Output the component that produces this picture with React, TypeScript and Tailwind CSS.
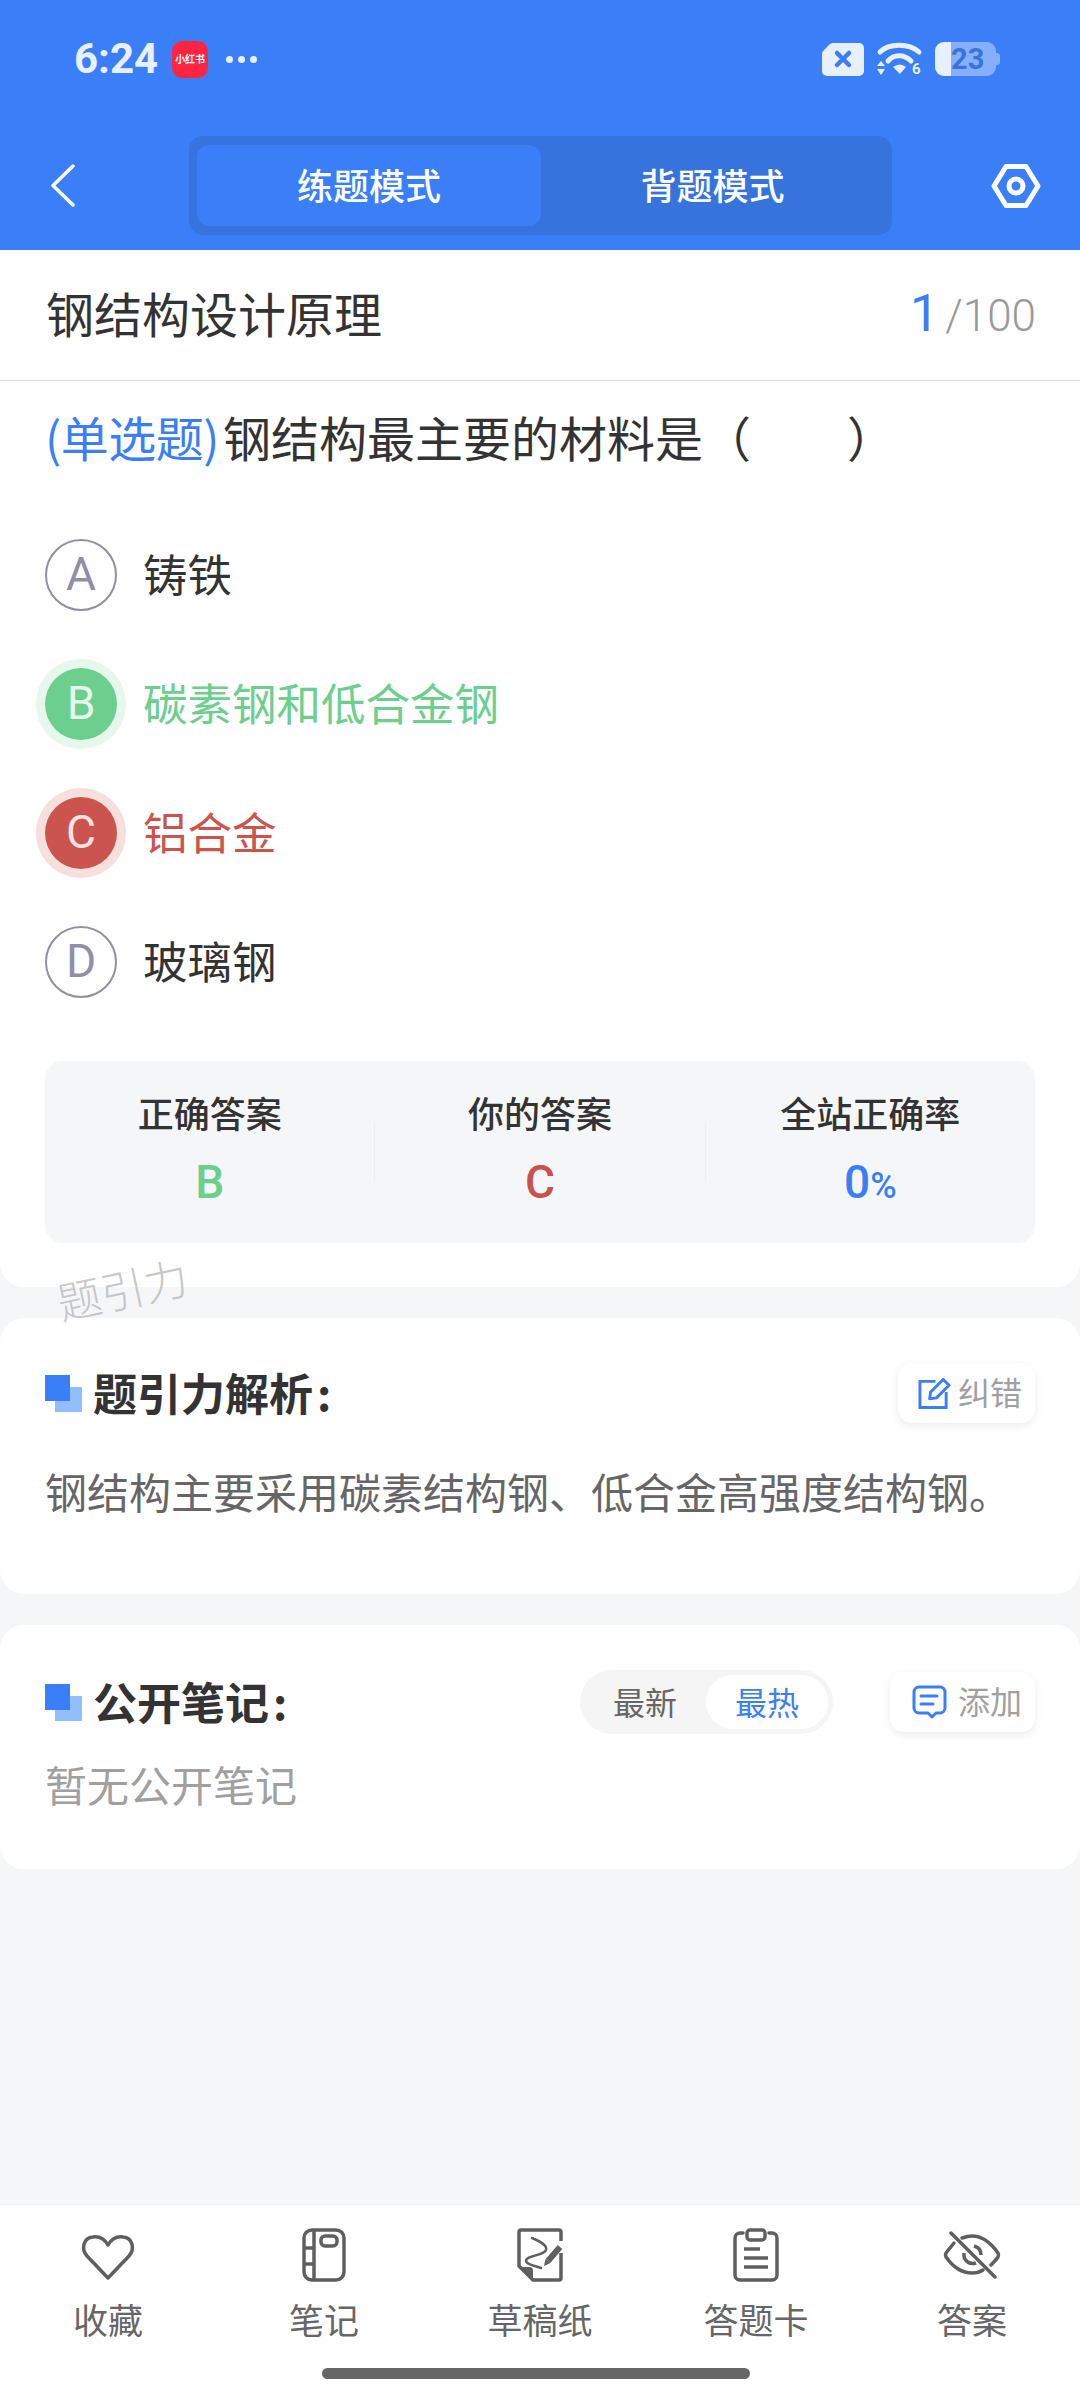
const options = [
  { key: 'A', text: '铸铁', state: 'idle' },
  { key: 'B', text: '碳素钢和低合金钢', state: 'right' },
  { key: 'C', text: '铝合金', state: 'wrong' },
  { key: 'D', text: '玻璃钢', state: 'idle' },
]

function SectionMark() {
  return (
    <svg width="37" height="37" viewBox="0 0 37 37" className="shrink-0">
      <rect x="10" y="12" width="27" height="25" fill="#93bdfb" />
      <rect x="0" y="0" width="25" height="26" fill="#3b7ff8" />
    </svg>
  )
}

function StatusBar() {
  return (
    <div className="flex h-[118px] items-center pl-[74px]">
      <span className="font-['Roboto',sans-serif] text-[42px] font-bold leading-none text-[#e8effd]">6:24</span>
      <div className="ml-[14px] flex h-[37px] w-[36px] items-center justify-center rounded-[10px] bg-[#ff2442] text-[10px] font-bold leading-none whitespace-nowrap text-white">
        小红书
      </div>
      <div className="ml-[18px] flex gap-[5px]">
        <div className="h-[7px] w-[7px] rounded-full bg-[#e8effd]" />
        <div className="h-[7px] w-[7px] rounded-full bg-[#e8effd]" />
        <div className="h-[7px] w-[7px] rounded-full bg-[#e8effd]" />
      </div>
      <div className="ml-auto mr-[80px] flex items-center gap-[11px]">
        <svg width="44" height="35" viewBox="0 0 44 35">
          <path d="M12 1H38a5 5 0 0 1 5 5V29a5 5 0 0 1-5 5H6a5 5 0 0 1-5-5V12Q1 10 3 8L9 2Q10 1 12 1Z" fill="#e8effd" />
          <path d="M16 11L28 23M28 11L16 23" stroke="#3b7ff8" strokeWidth="4.5" strokeLinecap="round" />
        </svg>
        <svg width="48" height="38" viewBox="0 0 48 38">
          <path d="M4 12C13 3 33 3 43 12" fill="none" stroke="#e8effd" strokeWidth="5" strokeLinecap="round" />
          <path d="M12 21C18 14 28 14 35 21" fill="none" stroke="#e8effd" strokeWidth="5" strokeLinecap="round" />
          <path d="M17 27Q24 22 30 27L24 34Z" fill="#e8effd" />
          <path d="M5 21L9 26H1ZM1 29H9L5 35Z" fill="#e8effd" />
          <text x="36" y="34" fill="#e8effd" fontSize="15" fontWeight="700" fontFamily="Roboto, sans-serif">6</text>
        </svg>
        <div className="relative h-[34px] w-[65px]">
          <div className="absolute left-0 top-0 h-[34px] w-[61px] overflow-hidden rounded-[9px] bg-[#85aefb]">
            <div className="h-full w-[16px] bg-[#e8effd]" />
          </div>
          <div className="absolute right-0 top-[11px] h-[12px] w-[4px] rounded-r-[3px] bg-[#85aefb]" />
          <span className="absolute left-[16px] top-0 font-['Roboto',sans-serif] text-[29px] font-bold leading-[34px] text-[#3673dd]">23</span>
        </div>
      </div>
    </div>
  )
}

function Header() {
  return (
    <div className="h-[250px] bg-[#3b7ff8]">
      <StatusBar />
      <div className="mt-[18px] flex items-start">
        <div className="flex h-[99px] w-[189px] items-center pl-[50px]">
          <svg width="26" height="43" viewBox="0 0 26 43">
            <path d="M23 2L3 21.5L23 41" fill="none" stroke="white" strokeWidth="3.5" strokeLinecap="round" strokeLinejoin="round" />
          </svg>
        </div>
        <div className="flex h-[99px] w-[703px] rounded-[14px] bg-[#3673dd] px-[8px] py-[9px] text-[36px] font-medium text-white">
          <div className="flex w-[344px] items-center justify-center rounded-[12px] bg-[#3b7ff8] pb-[4px]">练题模式</div>
          <div className="flex flex-1 items-center justify-center pb-[4px]">背题模式</div>
        </div>
        <div className="flex h-[99px] flex-1 items-center justify-end pr-[39px]">
          <svg width="50" height="46" viewBox="0 0 50 46">
            <path d="M15 3.5H35L47 23L35 42.5H15L3 23Z" fill="none" stroke="white" strokeWidth="5" strokeLinejoin="round" />
            <circle cx="25" cy="23" r="7" fill="none" stroke="white" strokeWidth="5" />
          </svg>
        </div>
      </div>
    </div>
  )
}

function OptionRow({ item }: { item: (typeof options)[number] }) {
  const circle =
    item.state === 'right'
      ? 'bg-[#6ccf8e] text-[#e6f7ec] shadow-[0_0_0_9px_#e6f7ec]'
      : item.state === 'wrong'
        ? 'bg-[#cc544e] text-[#f8e3e1] shadow-[0_0_0_9px_#f5e0de]'
        : 'border-2 border-[#8f90a6] text-[#8f90a6]'
  const label = item.state === 'right' ? 'text-[#6ccf8e]' : item.state === 'wrong' ? 'text-[#cc544e]' : 'text-[#333333]'
  return (
    <div className="flex h-[129px] items-center">
      <div className={`flex h-[72px] w-[72px] items-center justify-center rounded-full font-['Roboto',sans-serif] text-[46px] font-normal ${circle}`}>
        {item.key}
      </div>
      <span className={`ml-[26px] pb-[3px] text-[44.5px] ${label}`}>{item.text}</span>
    </div>
  )
}

function StatCol({ title, children }: { title: string; children: React.ReactNode }) {
  return (
    <div className="flex flex-1 flex-col items-center pb-[11px]">
      <div className="h-[50px] text-[36px] font-medium leading-[50px] text-[#333333]">{title}</div>
      <div className="mt-[20px] h-[50px] font-['Roboto',sans-serif] text-[46px] font-medium leading-[50px]">{children}</div>
    </div>
  )
}

function QuestionCard() {
  return (
    <div className="rounded-b-[24px] bg-white pb-[44px]">
      <div className="flex h-[131px] items-center justify-between border-b border-[#dcdcdc] pl-[46px] pr-[44px]">
        <span className="pb-[6px] text-[48px] leading-none text-[#333333]">钢结构设计原理</span>
        <span className="pb-[2px] font-['Roboto',sans-serif] font-light leading-none text-[#999999]">
          <span className="text-[52px] font-normal text-[#3b7ff8]">1</span>
          <span className="ml-[6px] text-[44px]">/100</span>
        </span>
      </div>
      <div className="mt-[25px] flex items-baseline pl-[45px] text-[48px] leading-[60px] text-[#333333]">
        <span className="tracking-[-0.5px] text-[#3b7ff8]">(单选题)</span>
        <span className="ml-[4px]">钢结构最主要的材料是（　　）</span>
      </div>
      <div className="mt-[44px] px-[45px]">
        {options.map((item) => (
          <OptionRow key={item.key} item={item} />
        ))}
      </div>
      <div className="mx-[45px] mt-[35px] flex h-[182px] items-center rounded-[18px] bg-[#f5f6f8]">
        <StatCol title="正确答案">
          <span className="text-[#6ccf8e]">B</span>
        </StatCol>
        <div className="h-[60px] w-px bg-[#eceef1]" />
        <StatCol title="你的答案">
          <span className="text-[#c9524d]">C</span>
        </StatCol>
        <div className="h-[60px] w-px bg-[#eceef1]" />
        <StatCol title="全站正确率">
          <span className="text-[#3b7ff8]">
            0<span className="text-[36px]">%</span>
          </span>
        </StatCol>
      </div>
    </div>
  )
}

function SmallButton({ icon, label, box }: { icon: React.ReactNode; label: string; box: string }) {
  return (
    <div className={`flex h-[60px] items-center rounded-[14px] bg-white text-[32px] text-[#a0a0a0] shadow-[0_3px_10px_rgba(0,0,0,0.08)] ${box}`}>
      {icon}
      <span className="ml-auto pb-[5px]">{label}</span>
    </div>
  )
}

function SectionTitle({ text }: { text: string }) {
  return (
    <span className="ml-[11px] pb-[2px] text-[44px] font-bold leading-none text-[#333333]">
      {text}
      <span className="ml-[4px]">:</span>
    </span>
  )
}

function AnalysisCard() {
  return (
    <div className="mt-[31px] rounded-[24px] bg-white px-[45px] pb-[73px] pt-[45px]">
      <div className="flex h-[60px] items-center">
        <SectionMark />
        <SectionTitle text="题引力解析" />
        <div className="ml-auto">
          <SmallButton
            box="w-[137px] pl-[20px] pr-[13px]"
            label="纠错"
            icon={
              <svg width="33" height="34" viewBox="0 0 34 34">
                <path d="M18 5H2V32H29V16" fill="none" stroke="#3b7ff8" strokeWidth="3" />
                <path d="M12 23L13 16L26 3L32 9L19 22Z" fill="none" stroke="#3b7ff8" strokeWidth="3" strokeLinejoin="round" />
              </svg>
            }
          />
        </div>
      </div>
      <div className="mt-[38px] text-[42px] leading-[60px] whitespace-nowrap text-[#666666]">钢结构主要采用碳素结构钢、低合金高强度结构钢。</div>
    </div>
  )
}

function NotesCard() {
  return (
    <div className="mt-[31px] rounded-[24px] bg-white px-[45px] pb-[55px] pt-[45px]">
      <div className="flex h-[64px] items-center">
        <SectionMark />
        <SectionTitle text="公开笔记" />
        <div className="ml-auto flex h-[64px] w-[253px] items-center rounded-full bg-[#f5f5f5] pl-[33px] pr-[5px] text-[32px]">
          <span className="pb-[3px] text-[#666666]">最新</span>
          <span className="ml-[29px] flex h-[54px] w-[122px] items-center justify-center rounded-full bg-white pb-[3px] text-[#3b7ff8]">最热</span>
        </div>
        <div className="ml-[57px]">
          <SmallButton
            box="w-[145px] pl-[22px] pr-[13px]"
            label="添加"
            icon={
              <svg width="35" height="34" viewBox="0 0 35 34">
                <path d="M7 2H28a5 5 0 0 1 5 5V23a5 5 0 0 1-5 5H24L20 32L16 28H7a5 5 0 0 1-5-5V7a5 5 0 0 1 5-5Z" fill="none" stroke="#3b7ff8" strokeWidth="3" strokeLinejoin="round" />
                <path d="M9 11H25M9 19H21" stroke="#3b7ff8" strokeWidth="3" strokeLinecap="round" />
              </svg>
            }
          />
        </div>
      </div>
      <div className="mt-[20px] text-[42px] leading-[60px] text-[#a0a0a0]">暂无公开笔记</div>
    </div>
  )
}

const tabIcons = [
  <svg key="fav" width="56" height="50" viewBox="0 0 56 50" className="mt-[4px]">
    <path d="M28 46L7 24C1 17 3 6 13 5C20 4 25 8 28 13C31 8 36 4 43 5C53 6 55 17 49 24Z" fill="none" stroke="#5f5f5f" strokeWidth="3.5" strokeLinejoin="round" />
  </svg>,
  <svg key="note" width="44" height="54" viewBox="0 0 44 54">
    <rect x="2" y="2" width="40" height="50" rx="8" fill="none" stroke="#5f5f5f" strokeWidth="3.5" />
    <path d="M12 2V52M2 20H12M2 36H12" stroke="#5f5f5f" strokeWidth="3.5" />
    <rect x="19" y="8" width="16" height="10" rx="4" fill="none" stroke="#5f5f5f" strokeWidth="3.5" />
  </svg>,
  <svg key="draft" width="46" height="54" viewBox="0 0 46 54">
    <path d="M44 13V4a2 2 0 0 0-2-2H4a2 2 0 0 0-2 2V38L16 52H42a2 2 0 0 0 2-2V25" fill="none" stroke="#5f5f5f" strokeWidth="3.5" strokeLinejoin="round" />
    <path d="M3 39H12a4 4 0 0 1 4 4V51Z" fill="#5f5f5f" />
    <path d="M15 10C22 13 31 17 29 22C27 28 9 27 9 33C9 36 18 38 24 40" fill="none" stroke="#5f5f5f" strokeWidth="2.5" strokeLinecap="round" />
    <path d="M31 33L43 19" stroke="#5f5f5f" strokeWidth="6" />
    <path d="M27 38L28.5 31L33.5 35Z" fill="#5f5f5f" />
  </svg>,
  <svg key="card" width="46" height="54" viewBox="0 0 46 54">
    <path d="M10 5H7a5 5 0 0 0-5 5V47a5 5 0 0 0 5 5H39a5 5 0 0 0 5-5V10a5 5 0 0 0-5-5H36" fill="none" stroke="#5f5f5f" strokeWidth="3.5" strokeLinecap="round" />
    <rect x="14" y="2" width="18" height="10" rx="3" fill="none" stroke="#5f5f5f" strokeWidth="3.5" />
    <path d="M11 21H27M11 30H35M11 39H35" stroke="#5f5f5f" strokeWidth="3.5" />
  </svg>,
  <svg key="eye" width="58" height="48" viewBox="0 0 58 48">
    <path d="M11 12L3 22Q2 24 3 26C10 36 19 42 29 42C33 42 37 41 40 39M19 7C22 6 26 5 29 5C39 5 48 12 55 22Q56 24 55 26C53 29 50 32 48 34" fill="none" stroke="#5f5f5f" strokeWidth="3.5" strokeLinecap="round" />
    <path d="M21 22C20 30 27 34 33 32M31 15C35 16 38 19 38 24" fill="none" stroke="#5f5f5f" strokeWidth="3.5" />
    <path d="M8 2L52 46" stroke="#5f5f5f" strokeWidth="3.5" strokeLinecap="round" />
  </svg>,
]

const tabs = ['收藏', '笔记', '草稿纸', '答题卡', '答案']

function BottomBar() {
  return (
    <div className="h-[196px] border-t border-[#eeeff1] bg-white pt-[23px]">
      <div className="grid grid-cols-5">
        {tabs.map((name, i) => (
          <div key={name} className="flex flex-col items-center">
            <div className="flex h-[54px] items-center justify-center">{tabIcons[i]}</div>
            <div className="mt-[12px] h-[51px] text-[35px] leading-[50px] text-[#666666]">{name}</div>
          </div>
        ))}
      </div>
      <div className="ml-[322px] mt-[23px] h-[11px] w-[428px] rounded-full bg-[#666666]" />
    </div>
  )
}

export default function App() {
  return (
    <div className="relative flex h-[2400px] w-[1080px] flex-col overflow-hidden bg-[#f5f6f8] font-['Noto_Sans_CJK_SC','Noto_Sans',sans-serif]">
      <Header />
      <div className="flex-1">
        <QuestionCard />
        <AnalysisCard />
        <NotesCard />
      </div>
      <BottomBar />
      <div className="absolute left-[56px] top-[1261px] -rotate-[12deg] text-[44px] font-light leading-[54px] text-[#b9b9b9]/80">题引力</div>
    </div>
  )
}
